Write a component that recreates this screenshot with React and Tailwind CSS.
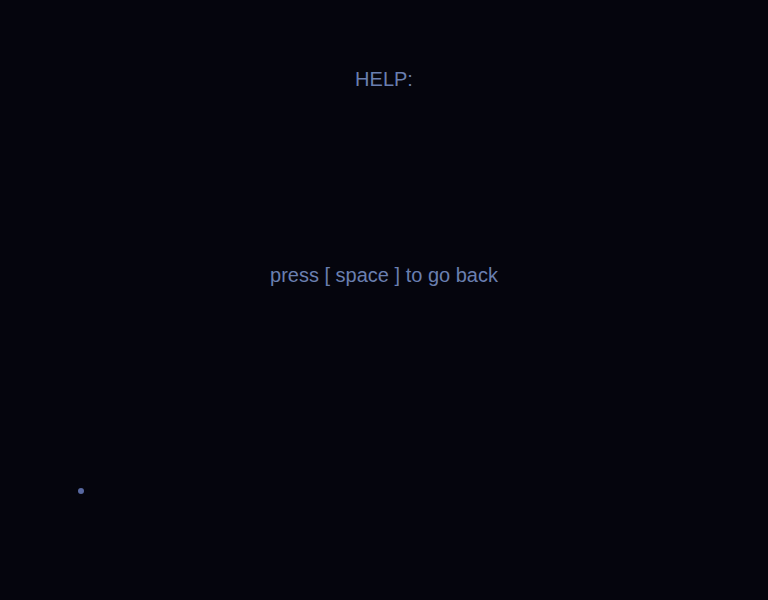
export default function App() {
  return (
    <div className="relative h-[600px] w-[768px] overflow-hidden bg-[#05050d] font-['Liberation_Sans',Arial,sans-serif] text-[#6a7fb0]">
      <div className="flex flex-col items-center pt-[67px]">
        <h1 className="text-[20px] leading-[24px]">HELP:</h1>
        <p className="mt-[172px] text-[20px] leading-[24px]">press [ space ] to go back</p>
      </div>
      <span className="absolute left-[78px] top-[488px] h-[6px] w-[6px] rounded-full bg-[#5868a0]" />
    </div>
  );
}
